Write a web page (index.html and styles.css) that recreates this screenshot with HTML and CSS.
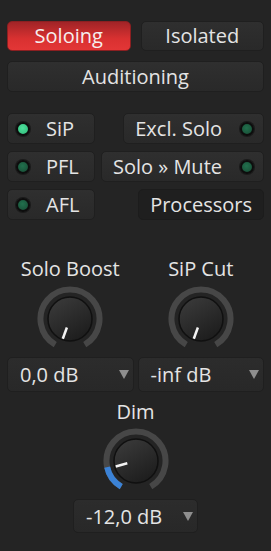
FILE: index.html
```html
<!DOCTYPE html>
<html lang="en">
<head>
  <meta charset="UTF-8" />
  <title>Monitor Section - Solo</title>
  <link rel="stylesheet" href="styles.css">
</head>
<body>

  <div class="panel">
    <div class="modes">
      <button class="btn active">Soloing</button>
      <button class="btn">Isolated</button>
      <button class="btn wide">Auditioning</button>
    </div>

    <div class="options">
      <div class="opt-row">
        <button class="btn toggle"><span class="led on"></span>SiP</button>
        <button class="btn toggle right">Excl. Solo<span class="led"></span></button>
      </div>
      <div class="opt-row">
        <button class="btn toggle"><span class="led"></span>PFL</button>
        <button class="btn toggle right">Solo » Mute<span class="led"></span></button>
      </div>
      <div class="opt-row">
        <button class="btn toggle"><span class="led"></span>AFL</button>
        <button class="btn plain">Processors</button>
      </div>
    </div>

    <div class="knobs">
      <div class="knob-cell">
        <div class="knob-label">Solo Boost</div>
        <svg class="knob" width="66" height="66" viewBox="0 0 66 66">
          <defs>
            <linearGradient id="body1" x1="0" y1="0" x2="0.6" y2="1">
              <stop offset="0" stop-color="#3d3d3d"/>
              <stop offset="1" stop-color="#1e1e1e"/>
            </linearGradient>
          </defs>
          <path d="M 18.25 58.55 A 29.5 29.5 0 1 1 47.75 58.55" fill="none" stroke="#474747" stroke-width="6"/>
          <circle cx="33" cy="33" r="22" fill="url(#body1)" stroke="#101010" stroke-width="1.5"/>
          <line x1="29.9" y1="41.5" x2="25.8" y2="52.7" stroke="#f4f4f4" stroke-width="2.5"/>
        </svg>
        <div class="dropdown"><span>0,0 dB</span><i class="arrow"></i></div>
      </div>
      <div class="knob-cell">
        <div class="knob-label">SiP Cut</div>
        <svg class="knob" width="66" height="66" viewBox="0 0 66 66">
          <path d="M 18.25 58.55 A 29.5 29.5 0 1 1 47.75 58.55" fill="none" stroke="#474747" stroke-width="6"/>
          <circle cx="33" cy="33" r="22" fill="url(#body1)" stroke="#101010" stroke-width="1.5"/>
          <line x1="29.9" y1="41.5" x2="25.8" y2="52.7" stroke="#f4f4f4" stroke-width="2.5"/>
        </svg>
        <div class="dropdown"><span>-inf dB</span><i class="arrow"></i></div>
      </div>
    </div>

    <div class="knob-cell dim">
      <div class="knob-label">Dim</div>
      <svg class="knob" width="66" height="66" viewBox="0 0 66 66">
        <path d="M 18.25 58.55 A 29.5 29.5 0 1 1 47.75 58.55" fill="none" stroke="#474747" stroke-width="6"/>
        <path d="M 18.25 58.55 A 29.5 29.5 0 0 1 4.14 39.13" fill="none" stroke="#3b82d6" stroke-width="6"/>
        <circle cx="33" cy="33" r="22" fill="url(#body1)" stroke="#101010" stroke-width="1.5"/>
        <line x1="24.3" y1="35.3" x2="12.7" y2="38.5" stroke="#f4f4f4" stroke-width="2.5"/>
      </svg>
      <div class="dropdown"><span>-12,0 dB</span><i class="arrow"></i></div>
    </div>
  </div>

</body>
</html>
```

FILE: styles.css
```css
body {
  margin: 0;
  padding: 0;
  background-color: #242424;
  color: #e4e4e4;
  font-family: 'Open Sans', sans-serif;
  font-size: 20px;
}

.panel {
  padding: 21px 7px 0 7px;
}

.modes {
  display: grid;
  grid-template-columns: 1fr 1fr;
  gap: 10px;
}

.btn {
  height: 30px;
  padding: 0;
  font-family: 'Open Sans', sans-serif;
  font-size: 20px;
  line-height: 24px;
  color: #e4e4e4;
  background: linear-gradient(#2f2f2f, #292929);
  border: 1px solid #1f1f1f;
  border-radius: 5px;
}

.btn.wide {
  grid-column: 1 / 3;
  height: 31px;
}

.btn.active {
  color: #f6eeee;
  background: linear-gradient(#a12427, #d93131 60%, #e33636);
  border-color: #8c1f21;
}

.options {
  margin-top: 21px;
  display: flex;
  flex-direction: column;
  gap: 7px;
}

.opt-row {
  display: flex;
  justify-content: space-between;
}

.toggle {
  height: 31px;
  display: flex;
  align-items: center;
}

.opt-row .toggle:first-child {
  width: 88px;
  padding-left: 8px;
  gap: 16px;
}

.toggle.right {
  padding: 0 9px 0 11px;
  gap: 18px;
}

.btn.plain {
  height: 31px;
  padding: 0 11px;
  background: #1f1f1f;
  border-color: #1c1c1c;
}

.led {
  width: 14px;
  height: 14px;
  box-sizing: border-box;
  border-radius: 50%;
  border: 2px solid #0d0d0d;
  background: radial-gradient(circle at 45% 40%, #21704d, #184a34);
  box-shadow: 0 0 0 1px #1a1a1a;
}

.led.on {
  background: radial-gradient(circle at 45% 40%, #4ee09c, #2fb878);
}

.knobs {
  margin-top: 37px;
  display: grid;
  grid-template-columns: 1fr 1fr;
  gap: 4px;
}

.knob-cell {
  display: flex;
  flex-direction: column;
  align-items: center;
}

.knob-label {
  line-height: 24px;
}

.knob {
  display: block;
  margin-top: 5px;
}

.dropdown {
  align-self: stretch;
  height: 35px;
  margin-top: 5px;
  box-sizing: border-box;
  display: flex;
  align-items: center;
  justify-content: space-between;
  padding: 0 4px 0 12px;
  background: linear-gradient(#2c2c2c, #282828);
  border: 1px solid #1f1f1f;
  border-radius: 5px;
}

.arrow {
  width: 0;
  height: 0;
  border-left: 5px solid transparent;
  border-right: 5px solid transparent;
  border-top: 9px solid #8e8e8e;
}

.dim {
  margin-top: 8px;
}

.dim .knob {
  margin-top: 4px;
}

.dim .dropdown {
  align-self: center;
  width: 125px;
  height: 34px;
}
```
